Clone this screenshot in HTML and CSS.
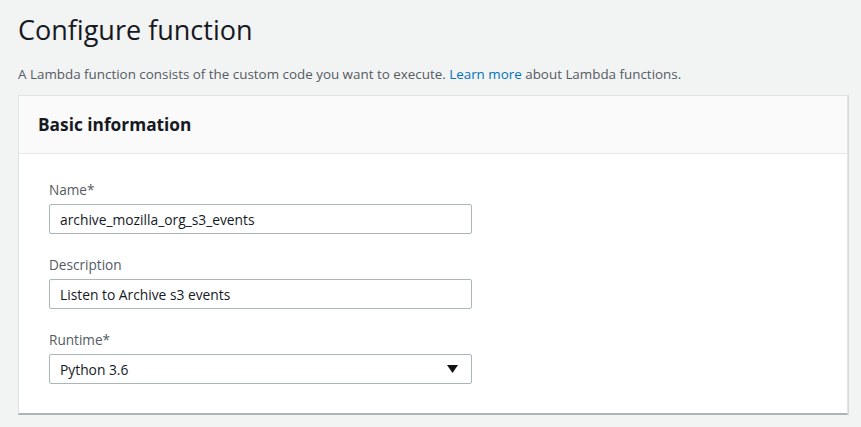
FILE: index.html
```html
<!DOCTYPE html>
<html>
<head>
<meta charset="utf-8">
<link rel="stylesheet" href="styles.css">
</head>
<body>
<div class="page">
  <h1 class="title">Configure function</h1>
  <p class="intro">A Lambda function consists of the custom code you want to execute. <a class="link" href="#">Learn more</a> about Lambda functions.</p>
  <section class="card">
    <header class="card-header">
      <h2 class="card-title">Basic information</h2>
    </header>
    <div class="card-body">
      <div class="field">
        <div class="label">Name*</div>
        <div class="input">archive_mozilla_org_s3_events</div>
      </div>
      <div class="field">
        <div class="label">Description</div>
        <div class="input">Listen to Archive s3 events</div>
      </div>
      <div class="field">
        <div class="label">Runtime*</div>
        <div class="input select">
          <span>Python 3.6</span>
          <svg class="caret" width="11" height="8" viewBox="0 0 11 8"><path d="M0 0H11L5.5 8Z" fill="#111"/></svg>
        </div>
      </div>
    </div>
  </section>
</div>
</body>
</html>
```
FILE: styles.css
```css
html, body {
  margin: 0;
  padding: 0;
  background: #f2f3f3;
}
body {
  font-family: "Open Sans", "Noto Sans", sans-serif;
  color: #16191f;
}
.page {
  padding: 11px 13px 0 18px;
}
.title {
  margin: 0;
  font-size: 27px;
  font-weight: 400;
  line-height: 38px;
  color: #16191f;
}
.intro {
  margin: 16px 0 0 0;
  font-size: 13.4px;
  line-height: 18px;
  color: #545b64;
}
.link {
  color: #0073bb;
  text-decoration: none;
}
.card {
  margin-top: 12px;
  background: #fff;
  border: 1px solid #e1e4e4;
  border-bottom: 2px solid #aab7b8;
  box-shadow: 1px 0 0 #d5dbdb;
}
.card-header {
  background: #fafafa;
  border-bottom: 1px solid #e6e7e8;
  height: 57px;
  display: flex;
  align-items: center;
  padding: 0 19px;
}
.card-title {
  margin: 0;
  font-size: 17.3px;
  font-weight: 700;
  color: #16191f;
}
.card-body {
  padding: 27px 30px 29px 30px;
  display: flex;
  flex-direction: column;
  gap: 22px;
}
.field {
  display: flex;
  flex-direction: column;
  gap: 5px;
}
.label {
  font-size: 13.6px;
  line-height: 18px;
  color: #545b64;
}
.input {
  width: 423px;
  box-sizing: border-box;
  height: 30px;
  border: 1px solid #aab7b8;
  border-radius: 2px;
  background: #fff;
  padding: 0 10px;
  display: flex;
  align-items: center;
  font-size: 13.8px;
  color: #16191f;
}
.select {
  justify-content: space-between;
  padding-right: 13px;
}
.caret {
  display: block;
}
```
